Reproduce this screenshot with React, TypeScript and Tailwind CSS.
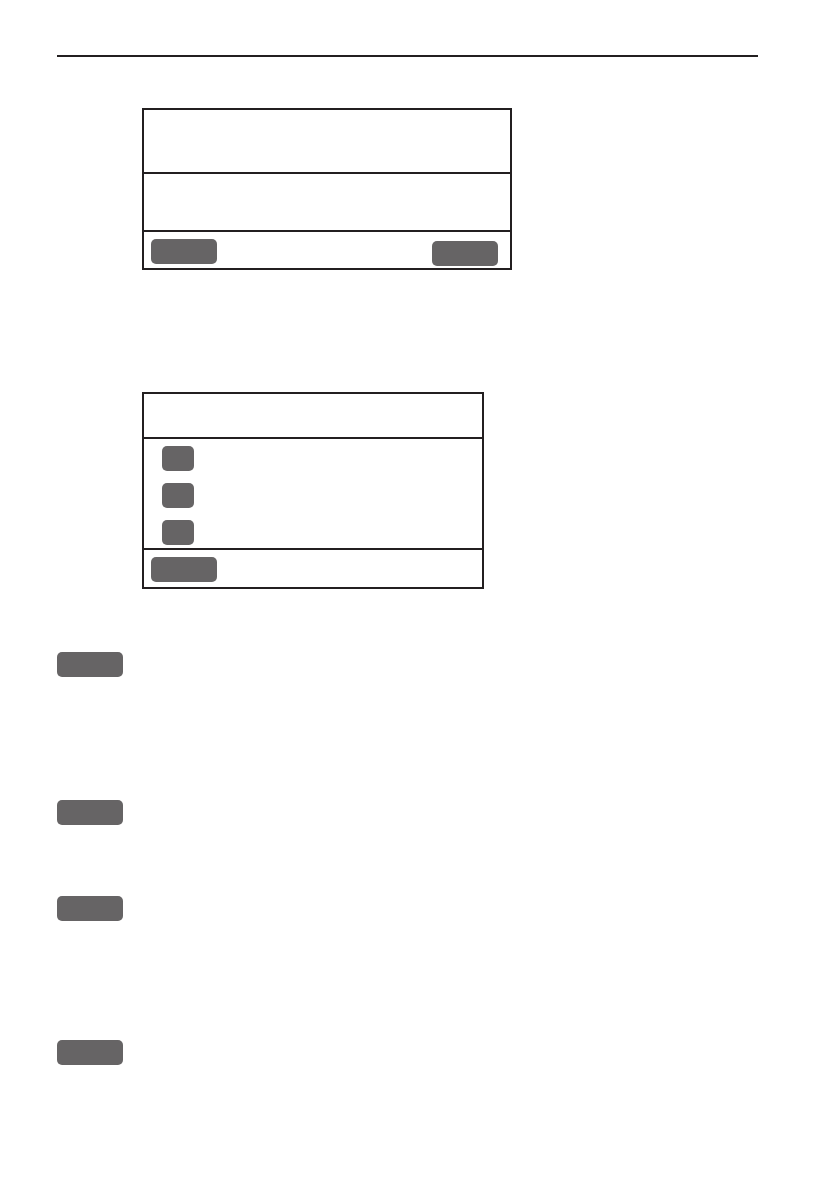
function Key({ className = '' }: { className?: string }) {
  return <div className={`h-[25px] rounded-[5px] bg-[#666465] ${className}`} />;
}

export default function App() {
  return (
    <div className="min-h-[1190px] w-[840px] bg-white pt-[55px] font-['Liberation_Sans',sans-serif]">
      {/* Header rule */}
      <div className="ml-[57px] h-[2px] w-[701px] bg-[#231f20]" />

      {/* Screen 1 */}
      <div className="ml-[142px] mt-[51px] flex w-[370px] flex-col border-2 border-[#231f20]">
        <div className="h-[62px]" />
        <div className="h-[58px] border-t-2 border-[#231f20]" />
        <div className="flex h-[38px] items-start justify-between border-t-2 border-[#231f20] pl-[7px] pr-[12px]">
          <Key className="mt-[7px] w-[66px]" />
          <Key className="mt-[9px] w-[66px]" />
        </div>
      </div>

      {/* Screen 2 */}
      <div className="ml-[142px] mt-[122px] flex w-[342px] flex-col border-2 border-[#231f20]">
        <div className="h-[43px]" />
        <div className="flex h-[111px] flex-col gap-[12px] border-t-2 border-[#231f20] pl-[18px] pt-[7px]">
          <Key className="w-[32px]" />
          <Key className="w-[32px]" />
          <Key className="w-[32px]" />
        </div>
        <div className="h-[39px] border-t-2 border-[#231f20] pl-[7px] pt-[7px]">
          <Key className="w-[66px]" />
        </div>
      </div>

      {/* Key list */}
      <div className="ml-[57px] flex flex-col">
        <Key className="mt-[63px] w-[66px]" />
        <Key className="mt-[123px] w-[66px]" />
        <Key className="mt-[71px] w-[66px]" />
        <Key className="mt-[119px] w-[66px]" />
      </div>
    </div>
  );
}
